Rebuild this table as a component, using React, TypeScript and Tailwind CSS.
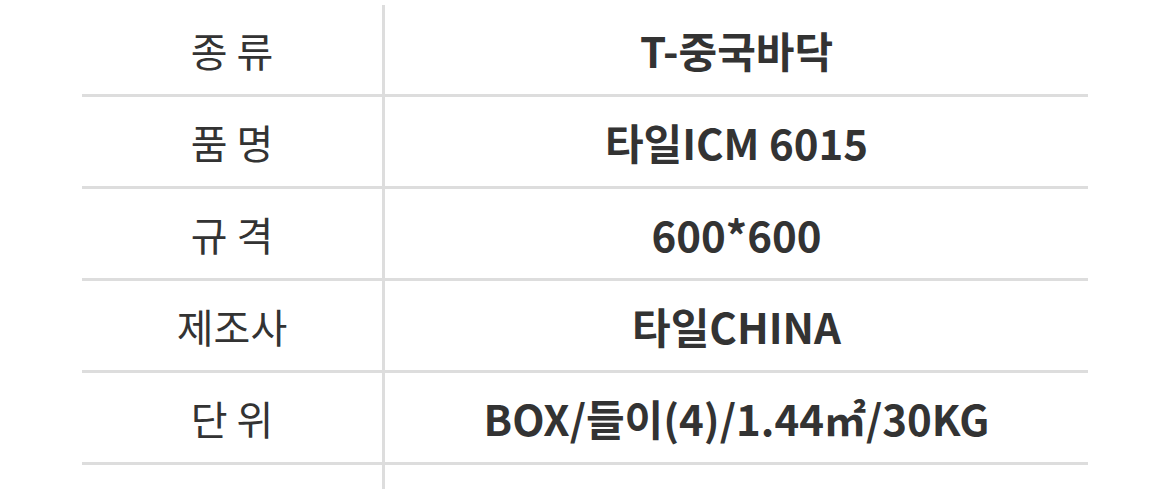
const rows = [
  { label: "종 류", value: "T-중국바닥" },
  { label: "품 명", value: "타일ICM 6015" },
  { label: "규 격", value: "600*600" },
  { label: "제조사", value: "타일CHINA" },
  { label: "단 위", value: "BOX/들이(4)/1.44㎡/30KG" },
]

export default function App() {
  return (
    <div
      className="w-[1170px] h-[489px] overflow-hidden bg-white pt-[5px] pl-[82px] text-[#333333]"
      style={{ fontFamily: '"Noto Sans CJK KR", "Noto Sans", sans-serif' }}
    >
      <div className="w-[1006px]">
        {rows.map((row) => (
          <div key={row.label} className="flex h-[92px] border-b-[3px] border-[#dddddd]">
            <div className="w-[303px] flex items-center justify-center text-[40px] border-r-[3px] border-[#dddddd]">
              {row.label}
            </div>
            <div className="flex-1 flex items-center justify-center text-[42px] font-bold">
              {row.value}
            </div>
          </div>
        ))}
        <div className="flex h-[40px]">
          <div className="w-[303px] border-r-[3px] border-[#dddddd]" />
          <div className="flex-1" />
        </div>
      </div>
    </div>
  )
}
